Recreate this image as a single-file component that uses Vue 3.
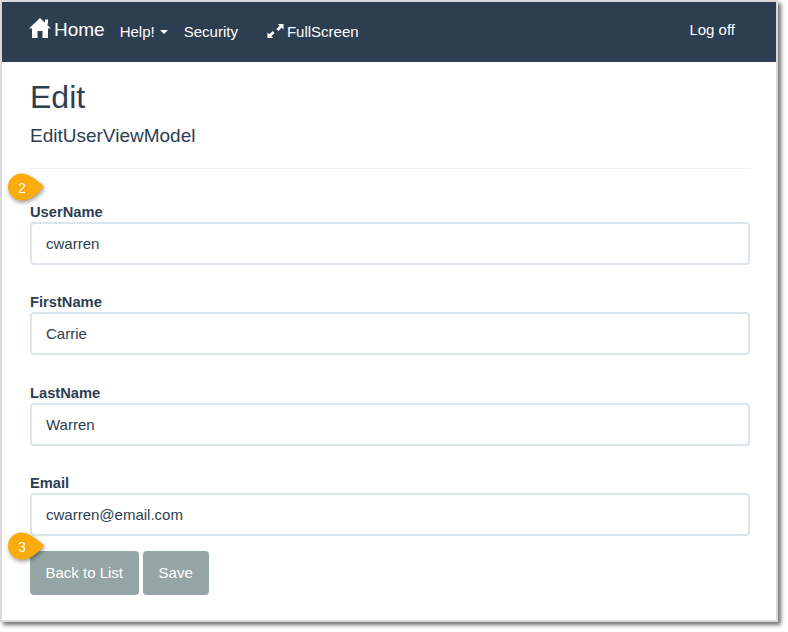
<script setup>
const fields = [
  { label: 'UserName', value: 'cwarren' },
  { label: 'FirstName', value: 'Carrie' },
  { label: 'LastName', value: 'Warren' },
  { label: 'Email', value: 'cwarren@email.com' },
]
</script>

<template>
  <div class="page">
    <div class="frame">
      <nav class="navbar">
        <a class="brand">
          <svg class="home" viewBox="0 0 22 20" width="22" height="20">
            <path d="M11 0 L22 10.5 L19 10.5 L19 20 L13.5 20 L13.5 13 L8.5 13 L8.5 20 L3 20 L3 10.5 L0 10.5 Z" fill="#fff" />
            <rect x="16" y="1.5" width="3" height="5" fill="#fff" />
          </svg>
          <span>Home</span>
        </a>
        <a class="link help">Help! <i class="caret"></i></a>
        <a class="link security">Security</a>
        <a class="link full">
          <svg viewBox="0 0 18 16" width="17" height="16">
            <path d="M17.5 0.5 L11.5 0.5 L13.5 2.5 L10 6 L12 8 L15.5 4.5 L17.5 6.5 Z" fill="#fff" />
            <path d="M0.5 15.5 L6.5 15.5 L4.5 13.5 L8 10 L6 8 L2.5 11.5 L0.5 9.5 Z" fill="#fff" />
          </svg>
          FullScreen
        </a>
        <a class="link logoff">Log off</a>
      </nav>
      <main class="content">
        <h2>Edit</h2>
        <h4>EditUserViewModel</h4>
        <hr />
        <div class="fields">
          <div v-for="f in fields" :key="f.label" class="field">
            <label>{{ f.label }}</label>
            <div class="input">{{ f.value }}</div>
          </div>
        </div>
        <div class="actions">
          <a class="btn">Back to List</a>
          <a class="btn save">Save</a>
        </div>
      </main>
      <svg class="badge b2" viewBox="0 0 44 36" width="44" height="36">
        <path d="M5 18 A13.5 13.5 0 0 1 18.5 4.5 Q27 4.5 41 17.5 Q30 31.5 18.5 31.5 A13.5 13.5 0 0 1 5 18 Z" fill="#fbab0b" />
        <text x="19" y="23.5" text-anchor="middle">2</text>
      </svg>
      <svg class="badge b3" viewBox="0 0 44 36" width="44" height="36">
        <path d="M5 18 A13.5 13.5 0 0 1 18.5 4.5 Q27 4.5 41 17.5 Q30 31.5 18.5 31.5 A13.5 13.5 0 0 1 5 18 Z" fill="#fbab0b" />
        <text x="19" y="23.5" text-anchor="middle">3</text>
      </svg>
    </div>
  </div>
</template>

<style scoped>
.page {
  width: 788px;
  height: 632px;
  background: #fff;
  overflow: hidden;
  font-family: "Liberation Sans", Arial, sans-serif;
  color: #2c3e50;
}
.frame {
  position: relative;
  box-sizing: border-box;
  width: 778px;
  height: 622px;
  border: 2px solid #d9d9d9;
  background: #fff;
  box-shadow: 3px 3px 4px rgba(0, 0, 0, 0.55);
}
.navbar {
  box-sizing: border-box;
  height: 60px;
  background: #2c3e50;
  display: flex;
  align-items: center;
  color: #fff;
  padding: 0 0 2px 27px;
  font-size: 15px;
}
.brand {
  display: flex;
  align-items: center;
  gap: 3px;
  font-size: 19px;
  margin-top: -2px;
}
.home {
  margin-top: -4px;
}
.link {
  display: flex;
  align-items: center;
}
.help {
  margin-left: 15px;
  gap: 4px;
}
.caret {
  display: inline-block;
  margin-left: 1px;
  margin-top: 2px;
  border-top: 4px solid #fff;
  border-left: 4px solid transparent;
  border-right: 4px solid transparent;
}
.security {
  margin-left: 16px;
}
.full {
  margin-left: 29px;
  gap: 3px;
}
.logoff {
  margin-left: auto;
  margin-right: 41px;
  margin-top: -3px;
}
.content {
  padding: 0 26px 0 28px;
}
h2 {
  margin: 18px 0 0;
  font-size: 32px;
  line-height: 35px;
  font-weight: 400;
}
h4 {
  margin: 11px 0 0;
  font-size: 19px;
  line-height: 20px;
  font-weight: 400;
}
hr {
  margin: 22px 0 0;
  border: 0;
  border-top: 1px solid #ecf0f1;
}
.fields {
  margin-top: 35px;
  display: flex;
  flex-direction: column;
  gap: 29.33px;
}
.field {
  display: flex;
  flex-direction: column;
}
label {
  display: block;
  font-size: 14.7px;
  font-weight: 700;
  line-height: 17px;
  margin-bottom: 1px;
}
.input {
  box-sizing: border-box;
  height: 43px;
  border: 2px solid #dce4ec;
  border-radius: 4px;
  padding: 0 14px;
  font-size: 15px;
  line-height: 39px;
}
.actions {
  margin-top: 15px;
  display: flex;
  gap: 4px;
}
.btn {
  height: 44px;
  line-height: 44px;
  padding: 0 15.5px;
  background: #95a5a6;
  color: #fff;
  font-size: 15px;
  border-radius: 4px;
}
.save {
  padding: 0 16px;
}
.badge {
  position: absolute;
  left: 1px;
  filter: drop-shadow(1px 2px 2px rgba(0, 0, 0, 0.4));
}
.badge text {
  fill: #fff;
  font-size: 14px;
  font-family: "Liberation Sans", Arial, sans-serif;
}
.b2 {
  top: 167px;
}
.b3 {
  top: 526px;
}
</style>
